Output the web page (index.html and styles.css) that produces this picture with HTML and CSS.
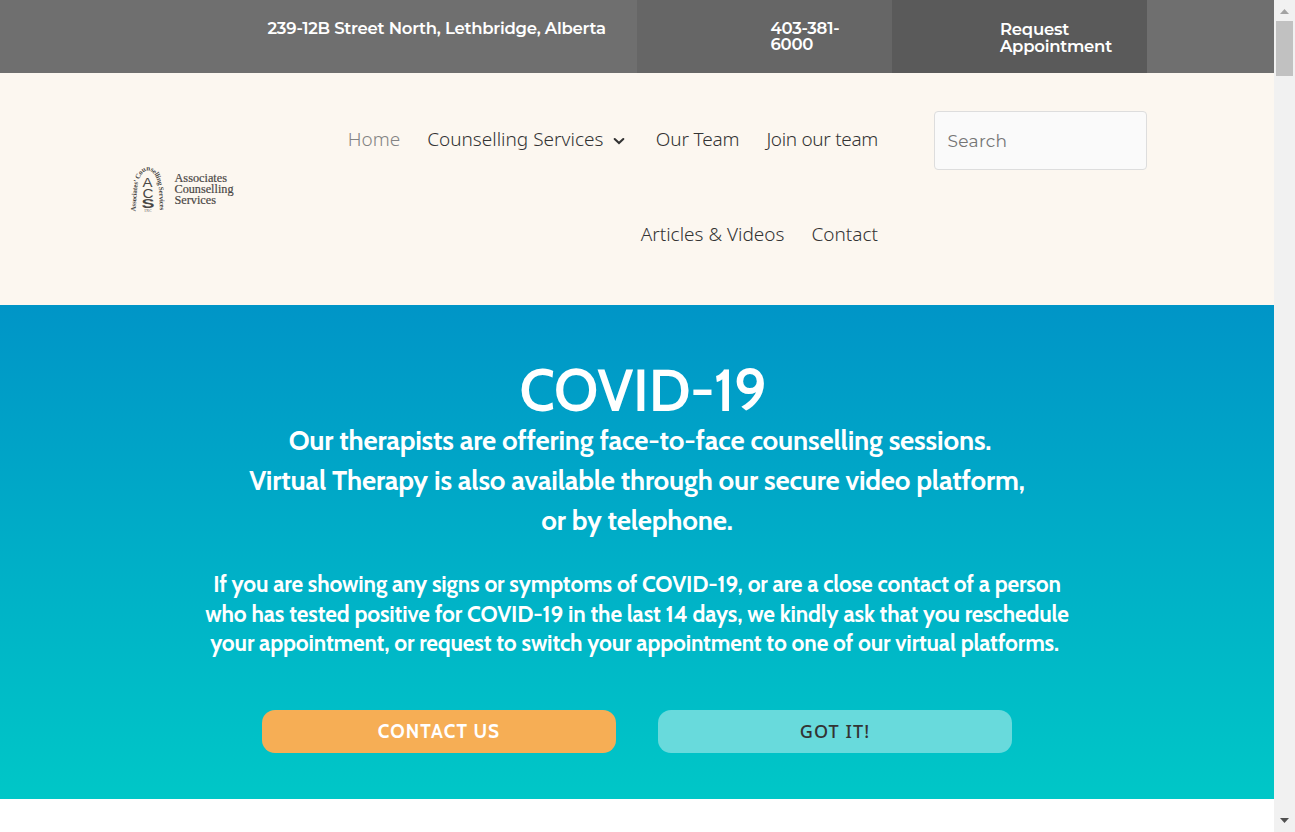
FILE: index.html
```html
<!DOCTYPE html>
<html lang="en">
<head>
<meta charset="utf-8">
<title>Associates Counselling Services</title>
<link rel="stylesheet" href="styles.css">
</head>
<body>
<div class="window">
  <div class="page">
    <div class="topbar">
      <div class="topbar-row">
        <div class="cell address"><span>239-12B Street North, Lethbridge, Alberta</span></div>
        <div class="cell phone"><span>403-381-</span><span class="digits">6000</span></div>
        <div class="cell request"><span class="req">Request</span><span class="appt">Appointment</span></div>
      </div>
    </div>
    <header class="header">
      <a class="logo">
        <svg width="106" height="48" viewBox="0 0 106 48">
          <defs><path id="arch" d="M6.500 46.500 L8 25 C10 -1 28 -1 30 25 L31 46.500"/></defs>
          <g fill="#4a4745" font-family="Liberation Serif, serif">
            <text font-size="7" font-weight="bold"><textPath href="#arch" textLength="90">Associates’ Counselling Services</textPath></text>
            <g font-family="Liberation Sans, sans-serif">
              <text x="13.500" y="22" font-size="12.500" textLength="10" lengthAdjust="spacingAndGlyphs">A</text>
              <text x="13.500" y="32.500" font-size="13" textLength="11" lengthAdjust="spacingAndGlyphs">C</text>
              <text x="12.500" y="43" font-size="13" font-weight="bold" textLength="13" lengthAdjust="spacingAndGlyphs">S</text>
            </g>
            <text x="15.500" y="46.500" font-size="3.500" textLength="7">INC</text>
            <g font-size="12.500" stroke="#4a4745" stroke-width=".2">
              <text x="45.500" y="17" textLength="52.500" lengthAdjust="spacingAndGlyphs">Associates</text>
              <text x="45.500" y="28.200" textLength="59" lengthAdjust="spacingAndGlyphs">Counselling</text>
              <text x="45.500" y="39.300" textLength="41.500" lengthAdjust="spacingAndGlyphs">Services</text>
            </g>
          </g>
        </svg>
      </a>
      <nav class="menu">
        <ul class="menu-row">
          <li class="n-home">Home</li>
          <li class="n-serv">Counselling Services<svg class="chev" width="12" height="9" viewBox="0 0 12 9"><path d="M1.700 2 L6 6 L10.300 2" fill="none" stroke="#333" stroke-width="2.100" stroke-linecap="round"/></svg></li>
          <li class="n-team">Our Team</li>
          <li class="n-join">Join our team</li>
        </ul>
        <ul class="menu-row">
          <li class="n-art">Articles &amp; Videos</li>
          <li class="n-cont">Contact</li>
        </ul>
      </nav>
      <div class="search"><span>Search</span></div>
    </header>
    <section class="hero">
      <h1><span>COVID-19</span></h1>
      <h2><span class="a1">Our therapists are offering face-to-face counselling sessions.</span><span class="a2">Virtual Therapy is also available through our secure video platform,</span><span class="a3">or by telephone.</span></h2>
      <h3><span class="b1">If you are showing any signs or symptoms of COVID-19, or are a close contact of a person</span><span class="b2">who has tested positive for COVID-19 in the last 14 days, we kindly ask that you reschedule</span><span class="b3">your appointment, or request to switch your appointment to one of our virtual platforms.</span></h3>
      <div class="buttons">
        <a class="btn contact"><span>CONTACT US</span></a>
        <a class="btn gotit"><span>GOT IT!</span></a>
      </div>
    </section>
  </div>
  <div class="scrollbar">
    <svg width="9" height="5" viewBox="0 0 9 5"><path d="M4.500 0 L9 5 H0 Z" fill="#a3a3a3"/></svg>
    <div class="thumb"></div>
    <svg class="down" width="9" height="5" viewBox="0 0 9 5"><path d="M0 0 H9 L4.500 5 Z" fill="#505050"/></svg>
  </div>
</div>
</body>
</html>
```
FILE: styles.css
```css
* { box-sizing: border-box; }
body { margin: 0; background: #fff; overflow: hidden; }
h1, h2, h3, ul { margin: 0; padding: 0; list-style: none; }
.window { display: grid; grid-template-columns: 1274px 21px; height: 832px; }
.topbar { height: 73px; background: #6f6f6f; }
.topbar-row { display: grid; grid-template-columns: 2fr 1fr 1fr; width: 1020px; height: 73px; margin: 0 auto; }
.cell { display: flex; flex-direction: column; align-items: flex-start; color: #fff; font: 600 16.5px/16px Montserrat, Inter, sans-serif; letter-spacing: -.25px; white-space: nowrap; }
.address { padding: 20px 0 0 140.5px; }
.phone { background: #666; padding: 20px 0 0 133.5px; }
.request { background: #5a5a5a; padding: 21px 0 0 108px; line-height: 17px; }

.header { height: 232px; background: #fcf7f0; display: flex; align-items: flex-start; padding-left: 129px; }
.logo { display: block; width: 106px; padding-top: 92px; }
.logo svg { display: block; }
.menu { width: 643px; padding-top: 54px; }
.menu-row { display: flex; justify-content: flex-end; gap: 27px; height: 95px; font: 300 19px/24px "Noto Sans", "Open Sans", sans-serif; color: #333; white-space: nowrap; }
.n-home { color: #838383; }
.chev { margin-left: 10px; }
.n-serv { padding-right: 3.5px; }
.n-team { letter-spacing: -.15px; }
.n-join { letter-spacing: -.32px; }
.search { width: 213px; height: 59px; margin: 38px 0 0 56px; padding: 0 12.5px; border: 1px solid #ddd; border-radius: 4px; background: #fafafa; display: flex; align-items: center; font: 400 17px/20px Montserrat, Inter, sans-serif; letter-spacing: .3px; color: #757575; }

.hero { height: 494px; padding-top: 56px; background: linear-gradient(#0095c7, #00c7c7); color: #fff; text-align: center; white-space: nowrap; font-family: Cabin, Lato, sans-serif; }
h1 { font-size: 58px; line-height: 60px; font-weight: 600; letter-spacing: -.2px; padding-left: 12px; margin-bottom: -1px; }
h2 { font-size: 27.5px; line-height: 40px; font-weight: 700; letter-spacing: -.18px; }
h3 { font-size: 22.6px; line-height: 29.7px; font-weight: 700; letter-spacing: -.16px; padding-top: 30px; }
h2 span, h3 span { display: block; }
.a1 { padding-left: 6px; }
.b3 { padding-right: 5px; }
.buttons { display: flex; justify-content: center; gap: 42px; margin-top: 51px; }
.btn { width: 354px; height: 43px; border-radius: 13px; display: flex; align-items: center; justify-content: center; font-size: 19px; letter-spacing: 1.1px; }
.contact { background: #f6ae55; font-weight: 700; }
.gotit { background: #68dadc; color: #333; font-family: "Noto Sans", sans-serif; font-size: 18px; font-weight: 500; padding-bottom: 2px; }

.scrollbar { background: #f1f1f1; display: flex; flex-direction: column; align-items: center; padding-top: 9px; }
.thumb { width: 17px; height: 55px; margin-top: 7px; background: #c1c1c1; }
.down { margin: auto 0 9px; }
```
